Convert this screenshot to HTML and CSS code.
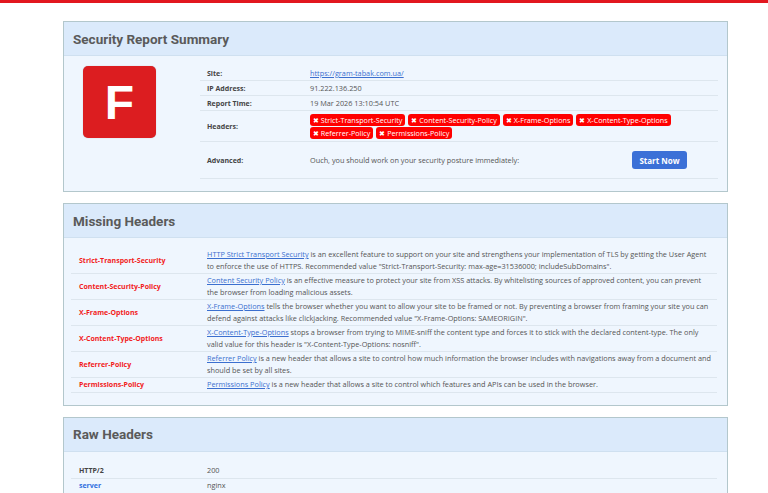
FILE: index.html
```html
<!DOCTYPE html>
<html>
<head>
<meta charset="utf-8">
<link rel="stylesheet" href="styles.css">
</head>
<body>
<div class="topbar"></div>
<div class="page">
  <section class="card">
    <div class="card-head"><h2>Security Report Summary</h2></div>
    <div class="card-body summary">
      <div class="grade-col"><div class="grade">F</div></div>
      <div class="info">
        <div class="row"><div class="k">Site:</div><div class="v"><a href="#">https://gram-tabak.com.ua/</a></div></div>
        <div class="row"><div class="k">IP Address:</div><div class="v">91.222.136.250</div></div>
        <div class="row"><div class="k">Report Time:</div><div class="v">19 Mar 2026 13:10:54 UTC</div></div>
        <div class="row headers"><div class="k">Headers:</div><div class="v badges">
          <span class="badge">&#10006; Strict-Transport-Security</span>
          <span class="badge">&#10006; Content-Security-Policy</span>
          <span class="badge">&#10006; X-Frame-Options</span>
          <span class="badge">&#10006; X-Content-Type-Options</span>
          <span class="badge">&#10006; Referrer-Policy</span>
          <span class="badge">&#10006; Permissions-Policy</span>
        </div></div>
        <div class="row advanced"><div class="k">Advanced:</div><div class="v adv"><span>Ouch, you should work on your security posture immediately:</span><a class="btn" href="#">Start Now</a></div></div>
      </div>
    </div>
  </section>

  <section class="card">
    <div class="card-head"><h2>Missing Headers</h2></div>
    <div class="card-body list">
      <div class="lrow"><div class="lk red">Strict-Transport-Security</div><div class="lv"><a href="#">HTTP Strict Transport Security</a> is an excellent feature to support on your site and strengthens your implementation of TLS by getting the User Agent to enforce the use of HTTPS. Recommended value "Strict-Transport-Security: max-age=31536000; includeSubDomains".</div></div>
      <div class="lrow"><div class="lk red">Content-Security-Policy</div><div class="lv"><a href="#">Content Security Policy</a> is an effective measure to protect your site from XSS attacks. By whitelisting sources of approved content, you can prevent the browser from loading malicious assets.</div></div>
      <div class="lrow"><div class="lk red">X-Frame-Options</div><div class="lv"><a href="#">X-Frame-Options</a> tells the browser whether you want to allow your site to be framed or not. By preventing a browser from framing your site you can defend against attacks like clickjacking. Recommended value "X-Frame-Options: SAMEORIGIN".</div></div>
      <div class="lrow"><div class="lk red">X-Content-Type-Options</div><div class="lv"><a href="#">X-Content-Type-Options</a> stops a browser from trying to MIME-sniff the content type and forces it to stick with the declared content-type. The only valid value for this header is "X-Content-Type-Options: nosniff".</div></div>
      <div class="lrow"><div class="lk red">Referrer-Policy</div><div class="lv"><a href="#">Referrer Policy</a> is a new header that allows a site to control how much information the browser includes with navigations away from a document and should be set by all sites.</div></div>
      <div class="lrow"><div class="lk red">Permissions-Policy</div><div class="lv"><a href="#">Permissions Policy</a> is a new header that allows a site to control which features and APIs can be used in the browser.</div></div>
    </div>
  </section>

  <section class="card">
    <div class="card-head"><h2>Raw Headers</h2></div>
    <div class="card-body list raw-list">
      <div class="lrow raw"><div class="lk">HTTP/2</div><div class="lv">200</div></div>
      <div class="lrow raw"><div class="lk blue">server</div><div class="lv">nginx</div></div>
    </div>
  </section>
</div>
</body>
</html>
```
FILE: styles.css
```css
html, body {
  margin: 0;
  padding: 0;
  background: #ffffff;
  font-family: "Open Sans", "Noto Sans", sans-serif;
  font-size: 7.3px;
  color: #555;
}
.topbar {
  height: 3px;
  background: #e2171f;
}
.page {
  padding: 18px 40px 0 63px;
}
.card {
  border: 1px solid #b3c7cc;
  margin-bottom: 11px;
  background: #eff6fe;
}
.card-head {
  background: #dbeafb;
  height: 33px;
  border-bottom: 1px solid #cfe0f0;
  display: flex;
  align-items: center;
  padding-left: 9px;
}
.card-head h2 {
  margin: 0;
  font-family: Roboto, "Liberation Sans", Arial, sans-serif;
  font-size: 13.5px;
  font-weight: bold;
  color: #5a5a5a;
}
.summary {
  display: flex;
  padding: 10px 9px 12px 19px;
}
.grade-col {
  width: 117px;
  flex: none;
}
.grade {
  width: 73px;
  height: 72px;
  background: #dc1d20;
  border-radius: 5px;
  color: #fff;
  font-family: "Liberation Sans", Arial, sans-serif;
  font-weight: bold;
  font-size: 48px;
  display: flex;
  align-items: center;
  justify-content: center;
  box-shadow: 0 0 1px rgba(0,0,0,0.3);
}
.info {
  flex: 1;
}
.row {
  display: flex;
  align-items: center;
  min-height: 14px;
  border-bottom: 1px solid #dde6ee;
}
.k {
  width: 103px;
  padding-left: 7px;
  flex: none;
  font-weight: bold;
  font-size: 7px;
  color: #444;
}
.v {
  flex: 1;
}
a {
  color: #3b6fcf;
  text-decoration: underline;
}
.row.headers {
  min-height: 30px;
}
.badges {
  display: flex;
  flex-wrap: wrap;
  gap: 1px 3px;
  padding: 2px 0 1px;
}
.badge {
  background: #ff0000;
  color: #fff;
  border-radius: 3px;
  height: 12px;
  line-height: 12px;
  padding: 0 3px;
  font-size: 7.2px;
}
.row.advanced {
  min-height: 36px;
}
.adv {
  display: flex;
  align-items: center;
  justify-content: space-between;
  padding-right: 31px;
}
.btn {
  background: #3b70d7;
  color: #fff;
  text-decoration: none;
  font-weight: bold;
  font-size: 8px;
  width: 55px;
  height: 18px;
  border-radius: 3px;
  display: flex;
  align-items: center;
  justify-content: center;
}
.list {
  padding: 10px 10px 12px 7px;
}
.list.raw-list {
  padding-top: 12px;
}
.lrow {
  display: flex;
  align-items: center;
  border-bottom: 1px solid #dde6ee;
  padding: 1px 0;
  line-height: 11.5px;
}
.lrow.raw {
  min-height: 12px;
}
.lk {
  width: 128px;
  padding-left: 8px;
  flex: none;
  font-weight: bold;
  font-size: 7px;
  color: #444;
}
.lk.red {
  color: #f21c1c;
}
.lk.blue {
  color: #2f6fe0;
}
.lv {
  flex: 1;
  padding-right: 5px;
}
```
